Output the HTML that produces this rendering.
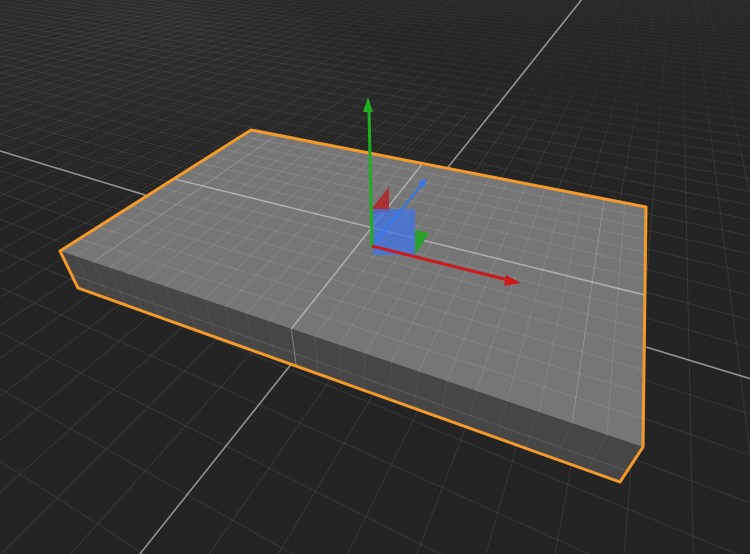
<!DOCTYPE html>
<html><head><meta charset="utf-8"><style>
html,body{margin:0;padding:0;background:#242424;overflow:hidden;width:750px;height:554px}
svg{display:block}
</style></head><body>
<svg id="s" width="750" height="554" viewBox="0 0 750 554" xmlns="http://www.w3.org/2000/svg">
<rect width="750" height="554" fill="#242424"/>
<g id="ground"></g>
<polygon points="60,251 643,447 620,482 78,288" fill="#464646"/>
<polygon points="60,251 251,130 646,207 643,447" fill="#767676"/>
<g id="boxgrid"></g>
<polygon points="60,251 251,130 646,207 643,447 620,482 78,288" fill="none" stroke="#f39a2a" stroke-width="3" stroke-linejoin="round"/>
<g id="giz">
<polygon points="373,207 389,187 389,212 373,214" fill="#b02a2a" opacity="0.9"/>
<rect x="373" y="209" width="42" height="46" fill="#3f74e8" opacity="0.75"/>
<polygon points="415,230 429,233 415,255" fill="#2aa02a"/>
<line x1="372" y1="246" x2="423" y2="183" stroke="#2f78f0" stroke-width="2"/>
<polygon points="426,178 418,183 424,188" fill="#2f78f0"/>
<line x1="372" y1="247" x2="369" y2="110" stroke="#1fae1f" stroke-width="3"/>
<polygon points="368,97 363,112 373,112" fill="#1fae1f"/>
<line x1="372" y1="246" x2="508" y2="280" stroke="#cc1a1a" stroke-width="3"/>
<polygon points="521,283 506,275 504,286" fill="#cc1a1a"/>
</g>
</svg>
<script>
(function(){
var A=[60,251],D=[643,447],C=[646,207],B=[251,130];
var x0=A[0],y0=A[1],x1=D[0],y1=D[1],x2=C[0],y2=C[1],x3=B[0],y3=B[1];
var sx=x0-x1+x2-x3,sy=y0-y1+y2-y3,dx1=x1-x2,dx2=x3-x2,dy1=y1-y2,dy2=y3-y2;
var den=dx1*dy2-dx2*dy1;
var g=(sx*dy2-dx2*sy)/den,h=(dx1*sy-sx*dy1)/den;
var a=x1-x0+g*x1,b=x3-x0+h*x3,c=x0,d=y1-y0+g*y1,e=y3-y0+h*y3,f=y0;
var W=12,Dh=7;
var VZ=[363,873];
var K=(288-251)/(873-288);
var G=1.8;
var ROT=-0.04,CR=Math.cos(ROT),SR=Math.sin(ROT);
function Hh(u,v,k){var s=(u+W)/(2*W),t=(v+Dh)/(2*Dh);
 return [a*s+b*t+c+k*VZ[0],d*s+e*t+f+k*VZ[1],g*s+h*t+1+k];}
function P(u,v,k){var p=Hh(u,v,k);return [p[0]/p[2],p[1]/p[2],p[2]];}
function Hg(u,v){var U=(u*CR-v*SR)*G,V=(u*SR+v*CR)*G;return Hh(U,V,K);}
function Pg(u,v){var p=Hg(u,v);return [p[0]/p[2],p[1]/p[2],p[2]];}
function L(arr,p,q,col,w){arr.push('<line x1="'+p[0].toFixed(1)+'" y1="'+p[1].toFixed(1)+'" x2="'+q[0].toFixed(1)+'" y2="'+q[1].toFixed(1)+'" stroke="'+col+'" stroke-width="'+w+'"/>');}
var gr=[];
var eps=0.01;
function gseg(u0,v0,u1,v1,col,w){
 var w0=Hg(u0,v0)[2],w1=Hg(u1,v1)[2];
 if(w0<eps&&w1<eps)return;
 if(w0<eps){var s=(eps-w0)/(w1-w0);u0+=s*(u1-u0);v0+=s*(v1-v0);}
 else if(w1<eps){var s2=(eps-w1)/(w0-w1);u1+=s2*(u0-u1);v1+=s2*(v0-v1);}
 var p=Pg(u0,v0),q=Pg(u1,v1);
 if(Math.max(p[0],q[0])<0||Math.min(p[0],q[0])>750||Math.max(p[1],q[1])<0||Math.min(p[1],q[1])>554)return;
 L(gr,p,q,col,w);
}
function onscr(p){return p[2]>eps&&p[0]>-40&&p[0]<790&&p[1]>-40&&p[1]<594;}
function unitLen(u,v){var p=Pg(u,v),pu=Pg(u+1,v),pv=Pg(u,v+1);
 return Math.max(Math.hypot(pu[0]-p[0],pu[1]-p[1]),Math.hypot(pv[0]-p[0],pv[1]-p[1]));}
function minLen(u,v){var p=Pg(u,v),pu=Pg(u+1,v),pv=Pg(u,v+1);
 return Math.min(Math.hypot(pu[0]-p[0],pu[1]-p[1]),Math.hypot(pv[0]-p[0],pv[1]-p[1]));}
function fineOp(u,v){var l=unitLen(u,v),m=minLen(u,v);
 var far=Math.max(0.3,Math.min(1,(m-4)/10));
 return Math.max(0,Math.min(1,(36-l)/12))*0.035*far;}
function unitOp(u,v){var m=minLen(u,v);if(!isFinite(m))return 0.085;return 0.085*Math.max(0.45,Math.min(1,(m-3)/8));}
var step=0.2,seg=2;
var UMIN=-120,UMAX=120,VMIN=-40,VMAX=240;
for(var i=Math.round(UMIN/step);i<=Math.round(UMAX/step);i++){var u=i*step; if(i%5===0)continue;
 for(var v=VMIN;v<VMAX;v+=seg){
  var pm=Pg(u,v+seg/2); if(!onscr(pm))continue;
  var op=fineOp(u,v+seg/2); if(op<0.004)continue;
  gseg(u,v,u,v+seg,'rgba(255,255,255,'+op.toFixed(3)+')',1);
 }}
for(var j=Math.round(VMIN/step);j<=Math.round(VMAX/step);j++){var v2=j*step; if(j%5===0)continue;
 for(var uu=UMIN;uu<UMAX;uu+=seg){
  var pm2=Pg(uu+seg/2,v2); if(!onscr(pm2))continue;
  var op2=fineOp(uu+seg/2,v2); if(op2<0.004)continue;
  gseg(uu,v2,uu+seg,v2,'rgba(255,255,255,'+op2.toFixed(3)+')',1);
 }}
var useg=4;
for(var u3=UMIN;u3<=UMAX;u3++){ if(u3===0)continue;
 for(var v4=VMIN;v4<VMAX;v4+=useg){
  gseg(u3,v4,u3,v4+useg,'rgba(255,255,255,'+unitOp(u3,v4+useg/2).toFixed(3)+')',1);}}
for(var v3=VMIN;v3<=VMAX;v3++){ if(v3===0)continue;
 for(var u4=UMIN;u4<UMAX;u4+=useg){
  gseg(u4,v3,u4+useg,v3,'rgba(255,255,255,'+unitOp(u4+useg/2,v3).toFixed(3)+')',1);}}
gseg(0,VMIN,0,VMAX,'rgba(255,255,255,0.5)',1.6);
gseg(UMIN,0,UMAX,0,'rgba(255,255,255,0.5)',1.6);
document.getElementById('ground').innerHTML=gr.join('');
var bg=[];
var mc='rgba(255,255,255,0.1)',ax='rgba(255,255,255,0.42)',mj='rgba(255,255,255,0.2)';
for(var bu=-W+1;bu<W;bu++){L(bg,P(bu,-Dh,0),P(bu,Dh,0),bu===0?ax:(Math.abs(bu)===10?mj:mc),bu===0?1.5:1);}
for(var bv=-Dh+1;bv<Dh;bv++){L(bg,P(-W,bv,0),P(W,bv,0),bv===0?ax:mc,bv===0?1.5:1);}
for(var fu=-W+1;fu<W;fu++){L(bg,P(fu,-Dh,0),P(fu,-Dh,K),fu===0?'rgba(255,255,255,0.3)':'rgba(255,255,255,0.06)',1);}
L(bg,P(-W,-Dh,K*0.62),P(W,-Dh,K*0.62),'rgba(255,255,255,0.1)',1);
document.getElementById('boxgrid').innerHTML=bg.join('');
})();
</script>
</body></html>
